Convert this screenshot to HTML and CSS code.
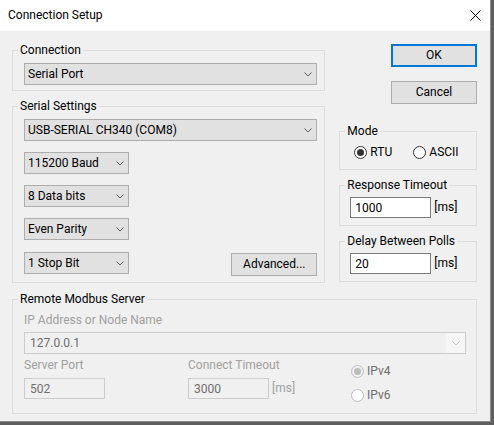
FILE: index.html
```html
<!DOCTYPE html>
<html>
<head>
<meta charset="utf-8">
<link rel="stylesheet" href="styles.css">
</head>
<body>
<div class="window">
  <div class="titlebar">
    <span class="title">Connection Setup</span>
    <svg class="close" width="11" height="11" viewBox="0 0 11 11"><path d="M0.5 0.5 L10.5 10.5 M10.5 0.5 L0.5 10.5"/></svg>
  </div>
  <div class="content">
    <div class="top">
      <div class="left">
        <fieldset class="group">
          <legend>Connection</legend>
          <div class="inner inner-conn">
            <div class="combo"><span>Serial Port</span><svg class="chev" width="8" height="5" viewBox="0 0 8 5"><path d="M0.5 0.5 L4 4 L7.5 0.5"/></svg></div>
          </div>
        </fieldset>
        <fieldset class="group">
          <legend>Serial Settings</legend>
          <div class="inner inner-serial">
            <div class="combo"><span>USB-SERIAL CH340 (COM8)</span><svg class="chev" width="8" height="5" viewBox="0 0 8 5"><path d="M0.5 0.5 L4 4 L7.5 0.5"/></svg></div>
            <div class="combo small row"><span>115200 Baud</span><svg class="chev" width="8" height="5" viewBox="0 0 8 5"><path d="M0.5 0.5 L4 4 L7.5 0.5"/></svg></div>
            <div class="combo small row"><span>8 Data bits</span><svg class="chev" width="8" height="5" viewBox="0 0 8 5"><path d="M0.5 0.5 L4 4 L7.5 0.5"/></svg></div>
            <div class="combo small row"><span>Even Parity</span><svg class="chev" width="8" height="5" viewBox="0 0 8 5"><path d="M0.5 0.5 L4 4 L7.5 0.5"/></svg></div>
            <div class="last-row">
              <div class="combo small"><span>1 Stop Bit</span><svg class="chev" width="8" height="5" viewBox="0 0 8 5"><path d="M0.5 0.5 L4 4 L7.5 0.5"/></svg></div>
              <div class="btn btn-adv">Advanced...</div>
            </div>
          </div>
        </fieldset>
      </div>
      <div class="right">
        <div class="btn btn-ok">OK</div>
        <div class="btn btn-cancel">Cancel</div>
        <fieldset class="group mode">
          <legend>Mode</legend>
          <div class="inner inner-mode">
            <div class="radio-item rtu"><span class="radio checked"></span><span>RTU</span></div>
            <div class="radio-item"><span class="radio"></span><span>ASCII</span></div>
          </div>
        </fieldset>
        <fieldset class="group small-group">
          <legend>Response Timeout</legend>
          <div class="inner inner-field">
            <div class="input">1000</div><span class="unit">[ms]</span>
          </div>
        </fieldset>
        <fieldset class="group small-group">
          <legend>Delay Between Polls</legend>
          <div class="inner inner-field">
            <div class="input">20</div><span class="unit">[ms]</span>
          </div>
        </fieldset>
      </div>
    </div>
    <fieldset class="group remote">
      <legend>Remote Modbus Server</legend>
      <div class="inner inner-remote">
        <div class="label">IP Address or Node Name</div>
        <div class="combo disabled ip"><span>127.0.0.1</span><span class="arrow-area"><svg class="chev" width="8" height="5" viewBox="0 0 8 5"><path d="M0.5 0.5 L4 4 L7.5 0.5"/></svg></span></div>
        <div class="bottom-row">
          <div class="col">
            <div class="label">Server Port</div>
            <div class="input disabled">502</div>
          </div>
          <div class="col">
            <div class="label">Connect Timeout</div>
            <div class="field-line"><div class="input disabled">3000</div><span class="unit disabled-text">[ms]</span></div>
          </div>
          <div class="col radios">
            <div class="radio-item dis"><span class="radio dis checked"></span><span>IPv4</span></div>
            <div class="radio-item dis"><span class="radio dis"></span><span>IPv6</span></div>
          </div>
        </div>
      </div>
    </fieldset>
  </div>
</div>
</body>
</html>
```

FILE: styles.css
```css
* { box-sizing: border-box; }
html, body { margin: 0; padding: 0; }
body {
  width: 494px;
  height: 425px;
  overflow: hidden;
  background: #5f5f5f;
  font-family: Roboto, "Noto Sans", sans-serif;
  font-size: 12px;
  color: #000;
}
.window {
  width: 491px;
  height: 422px;
  background: #f0f0f0;
  border-right: 1px solid #8c8c8c;
  border-bottom: 1px solid #8c8c8c;
  display: flex;
  flex-direction: column;
}
.titlebar {
  height: 31px;
  flex: none;
  background: #fff;
  display: flex;
  align-items: center;
  justify-content: space-between;
  padding-left: 8px;
  padding-right: 9px;
}
.title { line-height: 15px; }
.close path { stroke: #000; stroke-width: 1; fill: none; }
.content { padding: 12px 13px 0 12px; }
.top { display: flex; gap: 14px; align-items: flex-start; }
.left { width: 314px; display: flex; flex-direction: column; gap: 8px; }
.right { width: 138px; display: flex; flex-direction: column; }

fieldset.group {
  margin: 0;
  padding: 0;
  border: 1px solid #dcdcdc;
  min-width: 0;
  flex: none;
}
legend {
  margin-left: 5px;
  padding: 0 2px;
  height: 15px;
  line-height: 15px;
}
.inner-conn { padding: 5px 7px 5px 11px; }
.inner-serial { padding: 5px 7px 6px 11px; }

.combo {
  height: 22px;
  border: 1px solid #adadad;
  background: #e1e1e1;
  display: flex;
  align-items: center;
  justify-content: space-between;
  padding: 1px 4px 0 3px;
  line-height: 15px;
  white-space: nowrap;
}
.combo.small { width: 105px; }
.combo.row { margin-top: 11px; }
.chev { display: block; flex: none; }
.chev path { stroke: #5a5a5a; stroke-width: 1; fill: none; }
.last-row {
  display: flex;
  justify-content: space-between;
  align-items: flex-start;
  margin-top: 12px;
}
.btn {
  height: 23px;
  width: 86px;
  border: 1px solid #adadad;
  background: #e1e1e1;
  display: flex;
  align-items: center;
  justify-content: center;
  line-height: 15px;
  flex: none;
}
.btn-adv { margin-top: 1px; }
.btn-ok { align-self: flex-end; margin-top: 1px; border: 2px solid #0078d7; }
.btn-cancel { align-self: flex-end; margin-top: 14px; }
fieldset.mode { margin-top: 20px; }
fieldset.small-group { margin-top: 8px; }
.inner-mode {
  padding: 5px 4px 9px 14px;
  display: flex;
  align-items: center;
  height: 30px;
}
.radio-item {
  display: flex;
  align-items: center;
  gap: 3px;
  height: 16px;
  line-height: 15px;
}
.radio-item.rtu { width: 59px; }
.radio {
  width: 13px;
  height: 13px;
  border-radius: 50%;
  border: 1px solid #333;
  background: #fff;
  display: flex;
  align-items: center;
  justify-content: center;
  flex: none;
}
.radio.checked::after {
  content: "";
  width: 7px;
  height: 7px;
  border-radius: 50%;
  background: #333;
}
.radio.dis { border-color: #bcbcbc; }
.radio.dis.checked { background: #f0f0f0; }
.radio.dis.checked::after { background: #bcbcbc; }
.radio-item.dis { color: #6d6d6d; }

.inner-field {
  padding: 4px 4px 7px 10px;
  display: flex;
  align-items: center;
}
.input {
  width: 81px;
  height: 21px;
  border: 1px solid #7a7a7a;
  background: #fff;
  padding: 1px 0 0 4px;
  line-height: 15px;
  display: flex;
  align-items: center;
  flex: none;
}
.unit { margin-left: 3px; line-height: 15px; }
.input.disabled {
  border-color: #cccccc;
  background: #f0f0f0;
  color: #6d6d6d;
  padding-left: 5px;
}
.disabled-text { color: #a0a0a0; }

fieldset.remote { margin-top: 9px; }
.inner-remote { padding: 6px 10px 10px 11px; }
.label { line-height: 15px; height: 15px; color: #a0a0a0; }
.combo.disabled {
  margin-top: 4px;
  border-color: #cccccc;
  background: #f0f0f0;
  color: #6d6d6d;
  padding: 1px 0 0 5px;
}
.arrow-area {
  width: 19px;
  height: 20px;
  margin-top: -1px;
  background: #f6f6f6;
  display: flex;
  align-items: center;
  justify-content: center;
}
.combo.disabled .chev path { stroke: #bfbfbf; }
.bottom-row {
  display: grid;
  grid-template-columns: 164px 163px 1fr;
  margin-top: 4px;
}
.col .input { margin-top: 5px; }
.field-line { display: flex; align-items: center; margin-top: 5px; }
.field-line .input { margin-top: 0; }
.radios {
  padding-top: 5px;
  display: flex;
  flex-direction: column;
  gap: 8px;
}
```
